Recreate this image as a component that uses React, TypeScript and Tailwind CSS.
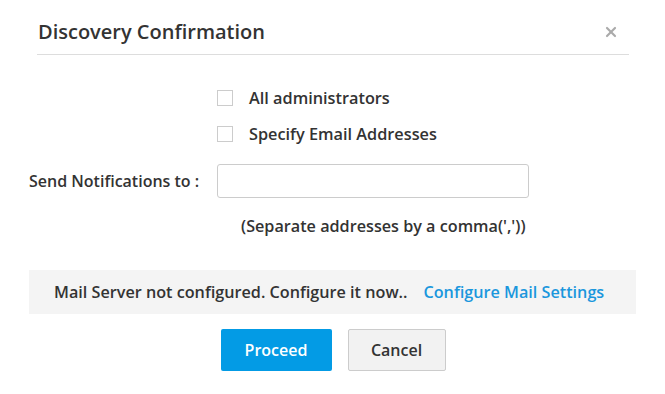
import { X } from "lucide-react";

const font = { fontFamily: '"Open Sans", "Liberation Sans", sans-serif' };

function Checkbox({ label }: { label: string }) {
  return (
    <label className="flex h-[24px] items-center gap-[16px]">
      <span className="h-[16px] w-[16px] border border-[#cccccc] bg-white" />
      <span className="text-[16.3px] font-semibold text-[#333333]">{label}</span>
    </label>
  );
}

export default function App() {
  return (
    <div className="h-[394px] w-[665px] bg-white" style={font}>
      <div className="ml-[37px] mr-[36px] flex h-[55px] items-center justify-between border-b border-[#dddddd] pt-[10px]">
        <h2 className="pl-[1px] text-[20px] font-semibold text-[#333333]">Discovery Confirmation</h2>
        <X className="mr-[10px] h-[16px] w-[16px] text-[#aaaaaa]" strokeWidth={3.2} />
      </div>

      <div className="ml-[217px] mt-[31px] flex flex-col gap-[12px]">
        <Checkbox label="All administrators" />
        <Checkbox label="Specify Email Addresses" />
      </div>

      <div className="mt-[18px] flex items-center">
        <span className="w-[217px] whitespace-nowrap pl-[29px] text-[16px] font-semibold text-[#333333]">Send Notifications to :</span>
        <input className="h-[34px] w-[312px] rounded-[3px] border border-[#cccccc]" />
      </div>
      <p className="ml-[241px] mt-[16px] text-[16.2px] font-semibold leading-[24px] text-[#333333]">(Separate addresses by a comma(','))</p>

      <div className="mx-[29px] mt-[32px] flex h-[44px] items-center bg-[#f4f4f4] pl-[25px] text-[16.2px] font-semibold">
        <span className="text-[#333333]">Mail Server not configured. Configure it now..</span>
        <a className="ml-[16px] text-[#1a97dd]">Configure Mail Settings</a>
      </div>

      <div className="mt-[15px] flex justify-center gap-[16px] pl-[1px] text-[16px] font-semibold">
        <button className="h-[42px] w-[111px] rounded-[2px] bg-[#039be5] text-white">Proceed</button>
        <button className="h-[42px] w-[98px] rounded-[2px] border border-[#cccccc] bg-[#f2f2f2] text-[#333333]">Cancel</button>
      </div>
    </div>
  );
}
